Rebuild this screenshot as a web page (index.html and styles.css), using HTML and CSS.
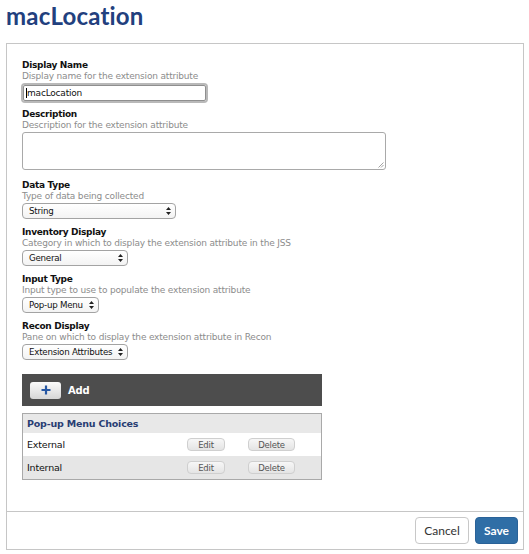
FILE: index.html
```html
<!DOCTYPE html>
<html>
<head>
<meta charset="utf-8">
<title>macLocation</title>
<link rel="stylesheet" href="styles.css">
</head>
<body>
<h1 class="title">macLocation</h1>
<div class="panel">
  <div class="panel-body">
    <div class="field">
      <div class="label">Display Name</div>
      <div class="hint">Display name for the extension attribute</div>
      <div class="textbox"><span class="caret"></span>macLocation</div>
    </div>
    <div class="field">
      <div class="label">Description</div>
      <div class="hint">Description for the extension attribute</div>
      <div class="textarea">
        <svg class="grip" width="7" height="7" viewBox="0 0 7 7"><path d="M6.5 1.5 L1.5 6.5 M6.5 4 L4 6.5" stroke="#8c8c8c" stroke-width="0.8" fill="none"/></svg>
      </div>
    </div>
    <div class="field field-sel">
      <div class="label">Data Type</div>
      <div class="hint">Type of data being collected</div>
      <div class="select w-data"><span>String</span><svg class="arrows" width="5" height="8" viewBox="0 0 5 8"><path d="M2.5 0 L5 3 L0 3 Z M2.5 8 L5 5 L0 5 Z" fill="#222"/></svg></div>
    </div>
    <div class="field field-sel">
      <div class="label">Inventory Display</div>
      <div class="hint">Category in which to display the extension attribute in the JSS</div>
      <div class="select w-inv"><span>General</span><svg class="arrows" width="5" height="8" viewBox="0 0 5 8"><path d="M2.5 0 L5 3 L0 3 Z M2.5 8 L5 5 L0 5 Z" fill="#222"/></svg></div>
    </div>
    <div class="field field-sel">
      <div class="label">Input Type</div>
      <div class="hint">Input type to use to populate the extension attribute</div>
      <div class="select w-input"><span>Pop-up Menu</span><svg class="arrows" width="5" height="8" viewBox="0 0 5 8"><path d="M2.5 0 L5 3 L0 3 Z M2.5 8 L5 5 L0 5 Z" fill="#222"/></svg></div>
    </div>
    <div class="field field-sel">
      <div class="label">Recon Display</div>
      <div class="hint">Pane on which to display the extension attribute in Recon</div>
      <div class="select w-recon"><span>Extension Attributes</span><svg class="arrows" width="5" height="8" viewBox="0 0 5 8"><path d="M2.5 0 L5 3 L0 3 Z M2.5 8 L5 5 L0 5 Z" fill="#222"/></svg></div>
    </div>

    <div class="addbar">
      <div class="addbtn"><svg width="10" height="10" viewBox="0 0 10 10"><path d="M5 0.5 V9.5 M0.5 5 H9.5" stroke="#2657a3" stroke-width="2.2"/></svg></div>
      <span class="addlabel">Add</span>
    </div>

    <div class="choices">
      <div class="choices-head">Pop-up Menu Choices</div>
      <div class="row">
        <span class="name">External</span>
        <span class="sbtn edit">Edit</span>
        <span class="sbtn del">Delete</span>
      </div>
      <div class="row alt">
        <span class="name">Internal</span>
        <span class="sbtn edit">Edit</span>
        <span class="sbtn del">Delete</span>
      </div>
    </div>
  </div>
  <div class="panel-footer">
    <button class="btn btn-cancel">Cancel</button>
    <button class="btn btn-save">Save</button>
  </div>
</div>
</body>
</html>
```
FILE: styles.css
```css
* { box-sizing: border-box; }
body {
  margin: 0;
  background: #fff;
  font-family: "DejaVu Sans", Verdana, sans-serif;
  color: #111;
}
.title {
  margin: 0;
  padding: 2px 0 0 6px;
  height: 43px;
  font-family: Lato, "Open Sans", sans-serif;
  font-weight: 700;
  font-size: 24px;
  line-height: 28px;
  letter-spacing: 0.2px;
  color: #22407e;
}
.panel {
  margin: 0 5px 0 6px;
  border: 1px solid #c6c6c6;
  height: 507px;
  display: flex;
  flex-direction: column;
}
.panel-body {
  flex: 1;
  padding: 16px 15px 0 15px;
}
.field { margin-bottom: 8px; }
.label {
  font-size: 9px;
  font-weight: 700;
  line-height: 11px;
  letter-spacing: -0.3px;
  color: #111;
}
.hint {
  font-size: 9px;
  line-height: 11px;
  letter-spacing: -0.18px;
  color: #8c8c8c;
}
.textbox {
  margin: 3px 0 3px 1px;
  width: 183px;
  height: 16px;
  border: 1px solid #8f8f8f;
  box-shadow: 0 0 0 2px #b9b9b9;
  border-radius: 2px;
  font-size: 9px;
  letter-spacing: -0.2px;
  line-height: 14px;
  padding-left: 2px;
  display: flex;
  align-items: center;
  color: #111;
}
.caret {
  display: inline-block;
  width: 1px;
  height: 10px;
  background: #000;
}
.textarea {
  margin-top: 1px;
  width: 364px;
  height: 38px;
  border: 1px solid #a9a9a9;
  border-radius: 3px;
  display: flex;
  justify-content: flex-end;
  align-items: flex-end;
  padding: 1px;
  margin-bottom: 10px;
}
.select {
  margin-top: 1px;
  height: 16px;
  border: 1px solid #a3a3a3;
  border-radius: 4px;
  background: linear-gradient(#ffffff, #f3f3f3);
  display: flex;
  align-items: center;
  justify-content: space-between;
  padding: 0 4px 0 6px;
  font-size: 8.7px;
  letter-spacing: -0.25px;
  white-space: nowrap;
  color: #111;
}
.w-data { width: 154px; }
.w-inv { width: 106px; }
.w-input { width: 77px; }
.w-recon { width: 106px; }
.addbar {
  margin-top: 14px;
  height: 32px;
  background: #4d4d4d;
  width: 300px;
  display: flex;
  align-items: center;
  padding-left: 8px;
  gap: 7px;
}
.addbtn {
  width: 31px;
  height: 17px;
  border-radius: 3px;
  background: linear-gradient(#fbfbfb, #d6d6d6);
  display: flex;
  align-items: center;
  justify-content: center;
}
.addlabel {
  color: #fff;
  font-weight: 700;
  font-size: 10px;
  letter-spacing: -0.2px;
}
.choices {
  margin-top: 7px;
  width: 300px;
  border: 1px solid #a9a9a9;
}
.choices-head {
  height: 19px;
  background: #e8e8e8;
  color: #283d73;
  font-weight: 700;
  font-size: 9.5px;
  letter-spacing: -0.2px;
  line-height: 19px;
  padding-left: 4px;
}
.row {
  height: 23px;
  display: grid;
  grid-template-columns: 164px 61px 1fr;
  align-items: center;
  background: #fff;
  font-size: 9.5px;
  letter-spacing: -0.2px;
}
.row.alt { background: #e6e6e6; }
.name { padding-left: 4px; color: #111; }
.sbtn {
  height: 13px;
  border: 1px solid #cfcfcf;
  border-radius: 4px;
  background: linear-gradient(#f7f7f7, #e4e4e4);
  font-size: 8.5px;
  color: #555;
  display: flex;
  align-items: center;
  justify-content: center;
}
.edit { width: 38px; }
.del { width: 47px; }
.panel-footer {
  border-top: 1px solid #c6c6c6;
  height: 38px;
  display: flex;
  justify-content: flex-end;
  align-items: center;
  gap: 6px;
  padding-right: 5px;
}
.btn {
  height: 27px;
  border-radius: 4px;
  font-family: Lato, "Open Sans", sans-serif;
  font-size: 12px;
  padding: 0;
  cursor: pointer;
}
.btn-cancel {
  width: 54px;
  background: #fff;
  border: 1px solid #c8c8c8;
  color: #333;
}
.btn-save {
  width: 43px;
  background: #2f6ea6;
  border: 1px solid #2a6298;
  color: #fff;
  font-weight: 700;
}
```
